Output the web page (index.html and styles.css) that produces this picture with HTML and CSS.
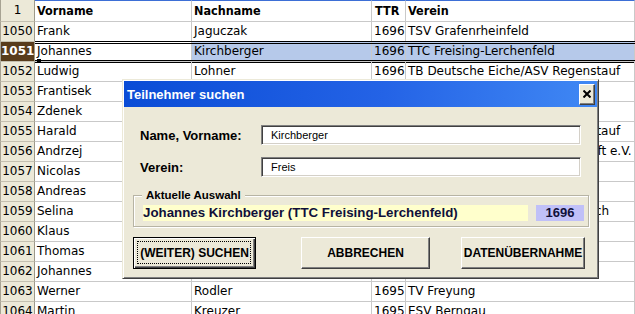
FILE: index.html
```html
<!DOCTYPE html>
<html lang="de">
<head>
    <meta charset="UTF-8">
    <title>Teilnehmer suchen</title>
    <link rel="stylesheet" href="styles.css">
</head>
<body>

<div class="sheet">
    <div class="row head">
        <div class="num">1</div>
        <div class="cell">Vorname</div>
        <div class="cell">Nachname</div>
        <div class="cell">TTR</div>
        <div class="cell">Verein</div>
    </div>
    <div class="row">
        <div class="num">1050</div>
        <div class="cell">Frank</div>
        <div class="cell">Jaguczak</div>
        <div class="cell ttr">1696</div>
        <div class="cell">TSV Grafenrheinfeld</div>
    </div>
    <div class="row selected">
        <div class="num">1051</div>
        <div class="cell active">Johannes</div>
        <div class="cell">Kirchberger</div>
        <div class="cell ttr">1696</div>
        <div class="cell">TTC Freising-Lerchenfeld</div>
        <span class="handle"></span>
    </div>
    <div class="row">
        <div class="num">1052</div>
        <div class="cell">Ludwig</div>
        <div class="cell">Lohner</div>
        <div class="cell ttr">1696</div>
        <div class="cell">TB Deutsche Eiche/ASV Regenstauf</div>
    </div>
    <div class="row">
        <div class="num">1053</div>
        <div class="cell">Frantisek</div>
        <div class="cell">Dvorak</div>
        <div class="cell ttr">1696</div>
        <div class="cell">TTC Weiden</div>
    </div>
    <div class="row">
        <div class="num">1054</div>
        <div class="cell">Zdenek</div>
        <div class="cell">Novak</div>
        <div class="cell ttr">1696</div>
        <div class="cell">TSV Kareth</div>
    </div>
    <div class="row">
        <div class="num">1055</div>
        <div class="cell">Harald</div>
        <div class="cell">Mayer</div>
        <div class="cell ttr">1696</div>
        <div class="cell">TB Deutsche Eiche/ASV Regenstauf</div>
    </div>
    <div class="row">
        <div class="num">1056</div>
        <div class="cell">Andrzej</div>
        <div class="cell">Kowalski</div>
        <div class="cell ttr">1696</div>
        <div class="cell">SpVgg Tischtennis-Gemeinschaft e.V.</div>
    </div>
    <div class="row">
        <div class="num">1057</div>
        <div class="cell">Nicolas</div>
        <div class="cell">Berger</div>
        <div class="cell ttr">1696</div>
        <div class="cell">SV Fortuna Regensburg-Ost e.V.</div>
    </div>
    <div class="row">
        <div class="num">1058</div>
        <div class="cell">Andreas</div>
        <div class="cell">Huber</div>
        <div class="cell ttr">1696</div>
        <div class="cell">TV Hof</div>
    </div>
    <div class="row">
        <div class="num">1059</div>
        <div class="cell">Selina</div>
        <div class="cell">Weber</div>
        <div class="cell ttr">1696</div>
        <div class="cell">DJK Sportfreunde TTC Schwabach</div>
    </div>
    <div class="row">
        <div class="num">1060</div>
        <div class="cell">Klaus</div>
        <div class="cell">Schmid</div>
        <div class="cell ttr">1696</div>
        <div class="cell">SV Neutraubling</div>
    </div>
    <div class="row">
        <div class="num">1061</div>
        <div class="cell">Thomas</div>
        <div class="cell">Wagner</div>
        <div class="cell ttr">1696</div>
        <div class="cell">TSG Bamberg</div>
    </div>
    <div class="row">
        <div class="num">1062</div>
        <div class="cell">Johannes</div>
        <div class="cell">Bauer</div>
        <div class="cell ttr">1696</div>
        <div class="cell">TTC Kist</div>
    </div>
    <div class="row">
        <div class="num">1063</div>
        <div class="cell">Werner</div>
        <div class="cell">Rodler</div>
        <div class="cell ttr">1695</div>
        <div class="cell">TV Freyung</div>
    </div>
    <div class="row">
        <div class="num">1064</div>
        <div class="cell">Martin</div>
        <div class="cell">Kreuzer</div>
        <div class="cell ttr">1695</div>
        <div class="cell">ESV Berngau</div>
    </div>
</div>

<div class="dialog">
    <div class="titlebar">
        <span class="title">Teilnehmer suchen</span>
        <button class="close" title="Schließen">
            <svg width="8" height="8" viewBox="0 0 8 8">
                <path d="M0.5 0.5 L7.5 7.5 M7.5 0.5 L0.5 7.5" stroke="#000" stroke-width="2"/>
            </svg>
        </button>
    </div>

    <div class="dialog-body">
        <div class="field">
            <label for="name">Name, Vorname:</label>
            <input type="text" id="name" value="Kirchberger">
        </div>
        <div class="field">
            <label for="verein">Verein:</label>
            <input type="text" id="verein" value="Freis">
        </div>

        <fieldset class="selection">
            <legend>Aktuelle Auswahl</legend>
            <div class="pick">
                <div class="pick-name">Johannes Kirchberger (TTC Freising-Lerchenfeld)</div>
                <div class="pick-ttr">1696</div>
            </div>
        </fieldset>

        <div class="buttons">
            <button class="btn default">(WEITER) SUCHEN</button>
            <button class="btn abort">ABBRECHEN</button>
            <button class="btn take">DATENÜBERNAHME</button>
        </div>
    </div>
</div>

</body>
</html>
```

FILE: styles.css
```css
body {
    margin: 0;
    width: 635px;
    height: 314px;
    overflow: hidden;
    position: relative;
    background: #fff;
    font-family: "DejaVu Sans", Verdana, sans-serif;
    font-size: 12px;
    color: #000;
}

/* spreadsheet */

.row {
    position: relative;
    display: grid;
    grid-template-columns: 35px 157px 180px 34px 1fr;
    height: 20px;
}

.row .num,
.row .cell {
    box-sizing: border-box;
    border-bottom: 1px solid #c9c9c9;
    border-right: 1px solid #c9c9c9;
    line-height: 19px;
    white-space: nowrap;
    overflow: hidden;
}

.row .cell {
    padding: 0 2px;
}

.row .num {
    background: #ece9d8;
    border-left: 1px solid #a7a393;
    border-right-color: #9d998a;
    border-bottom-color: #c4c0b0;
    text-align: center;
}

.row .ttr {
    text-align: right;
}

.head {
    height: 22px;
}

.head .cell {
    border-top: 1px solid #3d6fd6;
    line-height: 20px;
    font-family: "DejaVu Sans Condensed", "DejaVu Sans", sans-serif;
    font-weight: bold;
    font-size: 12.5px;
}

.head .num {
    line-height: 21px;
}

.head .cell:nth-child(4) {
    padding-left: 3px;
}

.selected .num {
    background: #583c1c;
    color: #fff;
    font-weight: bold;
}

.selected .cell {
    background: #b6c9ea;
}

.selected .cell.active {
    background: #fff;
}

.selected::after {
    content: '';
    position: absolute;
    left: 35px;
    right: 0;
    top: -1px;
    bottom: -1px;
    border-top: 3px double #000;
    border-bottom: 3px double #000;
    pointer-events: none;
}

.handle {
    position: absolute;
    left: 37px;
    top: 17px;
    width: 4px;
    height: 4px;
    background: #000;
    z-index: 1;
}

/* dialog */

.dialog {
    position: absolute;
    left: 122px;
    top: 79px;
    width: 477px;
    height: 200px;
    box-sizing: border-box;
    padding: 1px;
    background: #ece9d8;
    border: 1px solid;
    border-color: #ece9d8 #404040 #404040 #ece9d8;
    box-shadow: inset 1px 1px #fff, inset -1px -1px #808080;
    font-family: "Liberation Sans", Arial, sans-serif;
}

.titlebar {
    height: 26px;
    display: flex;
    align-items: center;
    justify-content: space-between;
    padding: 0 2px 0 3px;
    background: linear-gradient(90deg, #0a4cd6 0%, #2463e6 55%, #4088f4 100%);
}

.title {
    color: #fff;
    font-weight: bold;
    font-size: 13px;
}

.close {
    width: 16px;
    height: 21px;
    padding: 0;
    display: flex;
    align-items: center;
    justify-content: center;
    background: #ece9d8;
    border: 1px solid;
    border-color: #fff #404040 #404040 #fff;
    box-shadow: inset -1px -1px #808080;
}

.dialog-body {
    padding: 18px 8px 0 9px;
}

.field {
    display: flex;
    align-items: center;
    height: 20px;
    padding-left: 7px;
    margin-bottom: 12px;
}

.field label {
    width: 121px;
    font-weight: bold;
    font-size: 13px;
}

.field input {
    width: 320px;
    height: 20px;
    box-sizing: border-box;
    margin: 0;
    padding: 0 0 0 9px;
    border: 1px solid;
    border-color: #808080 #fff #fff #808080;
    box-shadow: inset 1px 1px #404040, inset -1px -1px #d4d0c8;
    background: #fff;
    font-family: "Liberation Sans", Arial, sans-serif;
    font-size: 11px;
    color: #000;
    outline: none;
}

.selection {
    margin: 0;
    padding: 4px 4px 5px 9px;
    border: 1px solid #b7b4a4;
    box-shadow: inset 1px 1px #fff, 1px 1px #fff;
    min-width: 0;
}

.selection legend {
    padding: 0 4px;
    margin-left: -1px;
    font-weight: bold;
    font-size: 11.5px;
    line-height: 12px;
    background: #ece9d8;
}

.pick {
    display: flex;
    height: 16px;
    gap: 8px;
}

.pick-name {
    flex: 1;
    background: #ffffcc;
    color: #10103a;
    font-weight: bold;
    font-size: 13.3px;
    line-height: 16px;
    white-space: nowrap;
}

.pick-ttr {
    width: 48px;
    background: #c0c0f8;
    color: #10103a;
    font-weight: bold;
    font-size: 13px;
    line-height: 16px;
    text-align: center;
}

.buttons {
    display: flex;
    margin-top: 10px;
}

.btn {
    position: relative;
    height: 32px;
    padding: 0;
    background: #ece9d8;
    border: 1px solid;
    border-color: #fff #404040 #404040 #fff;
    box-shadow: inset -1px -1px #808080;
    font-family: "Liberation Sans", Arial, sans-serif;
    font-weight: bold;
    font-size: 12px;
    color: #000;
    white-space: nowrap;
}

.btn.default {
    width: 123px;
    border-color: #000;
    box-shadow: inset 1px 1px #fff, inset -1px -1px #404040, inset -2px -2px #808080;
}

.btn.default::after {
    content: '';
    position: absolute;
    left: 3px;
    top: 3px;
    right: 4px;
    bottom: 4px;
    border: 1px dotted #000;
}

.btn.abort {
    width: 129px;
    margin-left: 45px;
}

.btn.take {
    width: 124px;
    margin-left: 31px;
}
```
